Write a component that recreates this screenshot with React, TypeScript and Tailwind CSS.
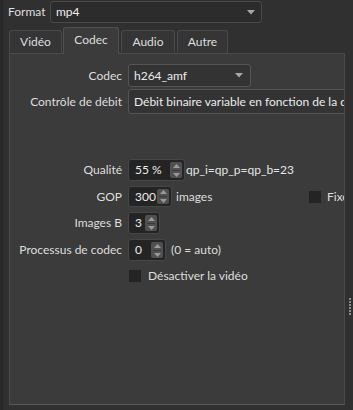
import React from "react";

function Arrow() {
  return (
    <svg width="8" height="5" viewBox="0 0 8 5" className="shrink-0">
      <path d="M0 0 L8 0 L4 4.5 Z" fill="#a8a8a8" />
    </svg>
  );
}

function Spin({ w, value }: { w: string; value: string }) {
  return (
    <div className={`${w} h-full flex items-stretch rounded-[3px] border border-[#474747] bg-[#242424]`}>
      <div className="flex-1 flex items-center pl-[6px] text-[#ececec] overflow-hidden whitespace-nowrap">{value}</div>
      <div className="w-[12px] my-[2px] mr-[2px] rounded-[2px] bg-[#505050] flex flex-col items-center justify-center gap-[2px]">
        <svg width="7" height="4" viewBox="0 0 7 4">
          <path d="M0 4 L7 4 L3.5 0 Z" fill="#9a9a9a" />
        </svg>
        <div className="w-[8px] h-px bg-[#3a3a3a]" />
        <svg width="7" height="4" viewBox="0 0 7 4">
          <path d="M0 0 L7 0 L3.5 4 Z" fill="#9a9a9a" />
        </svg>
      </div>
    </div>
  );
}

function Check() {
  return <div className="w-[14px] h-[14px] shrink-0 bg-[#242424] border border-[#3a3a3a]" />;
}

export default function App() {
  return (
    <div
      className="w-[353px] h-[410px] bg-[#303030] flex overflow-hidden text-[12px] leading-none text-[#dedede]"
      style={{ fontFamily: "Lato, 'Noto Sans', sans-serif" }}
    >
      <div className="w-[2px] h-full bg-[#2a2a2a] shrink-0" />
      <div className="w-px h-full bg-[#252525] shrink-0" />
      <div className="flex-1 flex flex-col">
        {/* Format row */}
        <div className="h-[22px] mt-[1px] flex items-center">
          <span className="ml-[5px] w-[42px]">Format</span>
          <div className="ml-[0px] w-[212px] h-full rounded-[3px] border border-[#4a4a4a] bg-[#2c2c2c] flex items-center justify-between pl-[5px] pr-[6px] text-[#ececec]">
            <span>mp4</span>
            <Arrow />
          </div>
        </div>
        {/* Tabs */}
        <div className="flex items-end h-[26px] mt-[4px] ml-[6px] relative z-10">
          <div className="w-[53px] h-[23px] rounded-t-[3px] border border-b-0 border-[#4a4a4a] bg-[#353535] flex items-center justify-center">Vidéo</div>
          <div className="ml-[1px] w-[56px] h-[27px] -mb-px rounded-t-[3px] border border-b-0 border-[#505050] bg-[#3b3b3b] flex items-center justify-center pb-[3px]">Codec</div>
          <div className="ml-[2px] w-[54px] h-[23px] rounded-t-[3px] border border-b-0 border-[#4a4a4a] bg-[#353535] flex items-center justify-center">Audio</div>
          <div className="ml-[2px] w-[51px] h-[23px] rounded-t-[3px] border border-b-0 border-[#4a4a4a] bg-[#353535] flex items-center justify-center">Autre</div>
        </div>
        {/* Panel + right strip */}
        <div className="flex">
          <div className="ml-[6px] w-[336px] h-[352px] border border-[#4a4a4a] border-b-[#5a5a5a] bg-[#3b3b3b] overflow-hidden">
            <div className="pt-[10px] grid grid-cols-[112px_1fr] gap-x-[6px] items-center">
              <div className="h-[23px] flex items-center justify-end">Codec</div>
              <div className="h-[23px]">
                <div className="w-[123px] h-full rounded-[3px] border border-[#555555] bg-[#333333] flex items-center justify-between pl-[5px] pr-[7px] text-[#ececec]">
                  <span>h264_amf</span>
                  <Arrow />
                </div>
              </div>

              <div className="mt-[2px] h-[25px] flex items-center justify-end">Contrôle de débit</div>
              <div className="mt-[2px] h-[25px]">
                <div className="w-[300px] h-full rounded-[3px] border border-[#555555] bg-[#333333] flex items-center pl-[5px] text-[#ececec] whitespace-nowrap">
                  Débit binaire variable en fonction de la qualité
                </div>
              </div>

              <div className="mt-[45px] h-[22px] flex items-center justify-end">Qualité</div>
              <div className="mt-[45px] h-[22px] flex items-center">
                <Spin w="w-[57px]" value="55 %" />
                <span className="ml-[1px] text-[#e4e4e4]">qp_i=qp_p=qp_b=23</span>
              </div>

              <div className="mt-[5px] h-[21px] flex items-center justify-end">GOP</div>
              <div className="mt-[5px] h-[21px] flex items-center">
                <Spin w="w-[44px]" value="300" />
                <span className="ml-[4px] w-[132px]">images</span>
                <Check />
                <span className="ml-[5px]">Fixe</span>
              </div>

              <div className="mt-[5px] h-[22px] flex items-center justify-end">Images B</div>
              <div className="mt-[5px] h-[22px] flex items-center">
                <Spin w="w-[32px]" value="3" />
              </div>

              <div className="mt-[5px] h-[22px] flex items-center justify-end">Processus de codec</div>
              <div className="mt-[5px] h-[22px] flex items-center">
                <Spin w="w-[38px]" value="0" />
                <span className="ml-[5px]">(0 = auto)</span>
              </div>

              <div className="mt-[4px] h-[22px]" />
              <div className="mt-[4px] h-[22px] flex items-center">
                <Check />
                <span className="ml-[6px]">Désactiver la vidéo</span>
              </div>
            </div>
          </div>
          <div className="flex-1 flex flex-col items-center pt-[245px]">
            <div className="flex flex-col gap-[1px] ml-[2px]">
              {[0, 1, 2, 3, 4, 5].map((i) => (
                <div key={i} className="w-[2px] h-[2px] bg-[#8a8a8a]" />
              ))}
            </div>
          </div>
        </div>
      </div>
    </div>
  );
}
